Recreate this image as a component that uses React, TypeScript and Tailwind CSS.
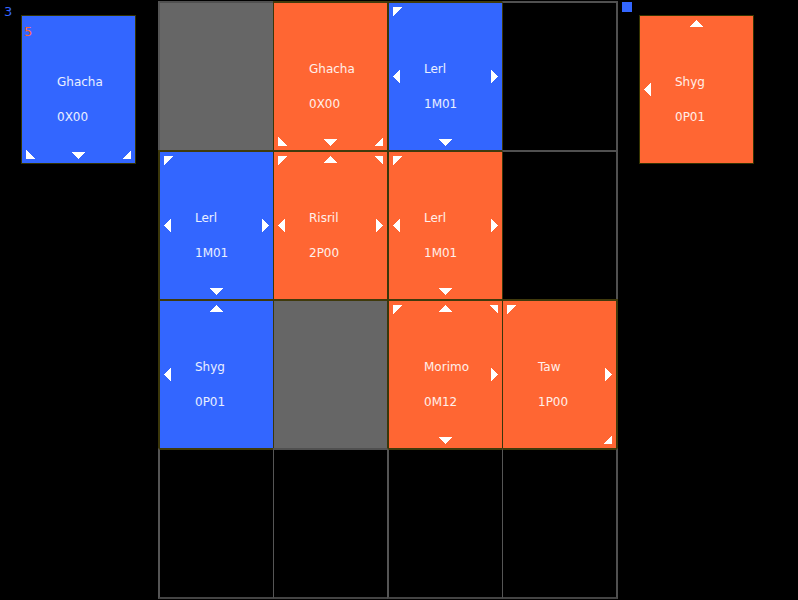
type Side = "blue" | "orange";
type Dir = "n" | "s" | "e" | "w" | "nw" | "ne" | "sw" | "se";

interface CardData {
  name: string;
  stats: string;
  side: Side;
  arrows: Dir[];
}

type Cell = CardData | "block" | null;

const arrowShapes: Record<Dir, { w: number; h: number; points: string; place: string }> = {
  n: { w: 13, h: 7, points: "6.5,0 13,7 0,7", place: "top-1 inset-x-0 mx-auto" },
  s: { w: 13, h: 7, points: "0,0 13,0 6.5,7", place: "bottom-1 inset-x-0 mx-auto" },
  w: { w: 7, h: 13, points: "7,0 7,13 0,6.5", place: "left-1 inset-y-0 my-auto" },
  e: { w: 7, h: 13, points: "0,0 7,6.5 0,13", place: "right-1 inset-y-0 my-auto" },
  nw: { w: 9, h: 9, points: "0,0 9,0 0,9", place: "left-1 top-1" },
  ne: { w: 9, h: 9, points: "0,0 9,0 9,9", place: "right-1 top-1" },
  sw: { w: 9, h: 9, points: "0,0 9,9 0,9", place: "left-1 bottom-1" },
  se: { w: 9, h: 9, points: "9,0 9,9 0,9", place: "right-1 bottom-1" },
};

const ghacha = (side: Side): CardData => ({ name: "Ghacha", stats: "0X00", side, arrows: ["sw", "s", "se"] });
const lerl = (side: Side): CardData => ({ name: "Lerl", stats: "1M01", side, arrows: ["nw", "w", "e", "s"] });
const shyg = (side: Side): CardData => ({ name: "Shyg", stats: "0P01", side, arrows: ["n", "w"] });

const board: Cell[][] = [
  ["block", ghacha("orange"), lerl("blue"), null],
  [
    lerl("blue"),
    { name: "Risril", stats: "2P00", side: "orange", arrows: ["nw", "n", "ne", "w", "e"] },
    lerl("orange"),
    null,
  ],
  [
    shyg("blue"),
    "block",
    { name: "Morimo", stats: "0M12", side: "orange", arrows: ["nw", "n", "ne", "e", "s"] },
    { name: "Taw", stats: "1P00", side: "orange", arrows: ["nw", "e", "se"] },
  ],
  [null, null, null, null],
];

function isCard(row: number, col: number) {
  const cell = board[row]?.[col];
  return cell != null && cell !== "block";
}

function Card({ card }: { card: CardData }) {
  return (
    <div
      className={`relative h-full pl-[35px] pt-[49px] leading-[35px] text-white/90 ${
        card.side === "blue" ? "bg-[#3366ff]" : "bg-[#ff6633]"
      }`}
    >
      <p>{card.name}</p>
      <p>{card.stats}</p>
      {card.arrows.map((dir) => {
        const a = arrowShapes[dir];
        return (
          <svg
            key={dir}
            className={`absolute ${a.place}`}
            width={a.w}
            height={a.h}
            viewBox={`0 0 ${a.w} ${a.h}`}
            shapeRendering="crispEdges"
            aria-hidden="true"
          >
            <polygon points={a.points} fill="#fff" />
          </svg>
        );
      })}
    </div>
  );
}

function BoardCell({ row, col }: { row: number; col: number }) {
  const cell = board[row][col];
  const here = isCard(row, col);
  const top = here || isCard(row - 1, col) ? "border-t-[#403a0c]" : "border-t-[#505050]";
  const left = here || isCard(row, col - 1) ? "border-l-[#3a360a]" : "border-l-[#555555]";
  const right = here ? "border-r-[#403a0c]" : "border-r-[#505050]";
  const leftWidth = col % 2 === 0 ? "border-l-2" : "border-l";
  const rightWidth = col === 3 ? "border-r-2" : "";
  const bottom = row === 3 ? "h-[151px] border-b-2 border-b-[#444444]" : "h-[149px]";
  return (
    <div className={`border-t-2 ${top} ${left} ${right} ${leftWidth} ${rightWidth} ${bottom}`}>
      {cell === "block" && <div className="h-full bg-[#666666]" />}
      {cell && cell !== "block" && <Card card={cell} />}
    </div>
  );
}

function HandCard({ card, score }: { card: CardData; score?: number }) {
  return (
    <div className="relative mt-[15px] h-[149px] w-[115px] shrink-0 border border-[#333300]">
      <Card card={card} />
      {score !== undefined && (
        <span className="absolute left-[2px] top-2 text-[13px] leading-[15px] text-[#ff6633]">{score}</span>
      )}
    </div>
  );
}

export default function App() {
  return (
    <main className="grid min-h-screen grid-cols-[158fr_460fr_180fr] bg-black font-['DejaVu_Sans',sans-serif] text-[12px]">
      <section className="flex items-start" aria-label="Blue hand">
        <span className="w-[21px] shrink-0 pl-1 pt-1 text-[13px] leading-[15px] text-[#3366ff]">3</span>
        <HandCard card={ghacha("blue")} score={5} />
      </section>
      <section className="pt-px" aria-label="Board">
        <div className="grid grid-cols-[115fr_114fr_115fr_116fr]">
          {board.map((cells, row) => cells.map((_, col) => <BoardCell key={`${row}-${col}`} row={row} col={col} />))}
        </div>
      </section>
      <section className="flex items-start gap-[7px] pl-1" aria-label="Orange hand">
        <div className="mt-[2px] size-[10px] shrink-0 bg-[#3366ff]" />
        <HandCard card={shyg("orange")} />
      </section>
    </main>
  );
}
